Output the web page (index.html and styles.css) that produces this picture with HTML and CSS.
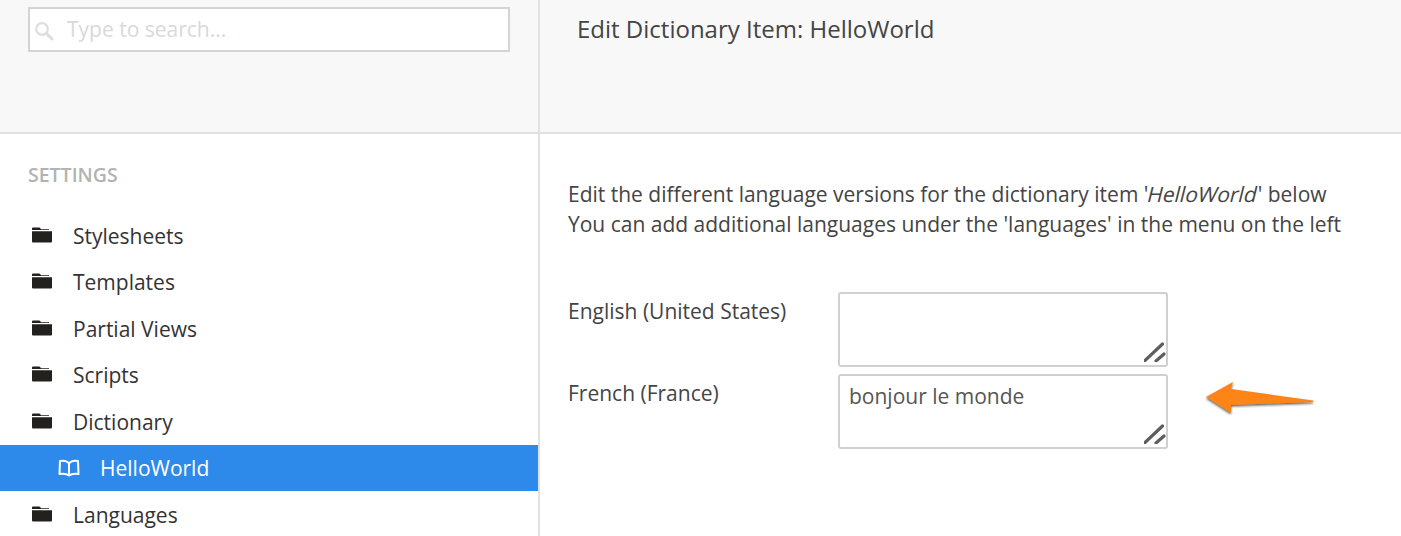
FILE: index.html
```html
<!DOCTYPE html>
<html lang="en">
<head>
<meta charset="utf-8">
<title>Edit Dictionary Item</title>
<link rel="stylesheet" href="styles.css">
</head>
<body>
<div class="app">
  <aside class="sidebar">
    <div class="side-head">
      <div class="search">
        <svg class="search-icon" width="20" height="20" viewBox="0 0 20 20"><circle cx="7" cy="8" r="5.800" fill="none" stroke="#dedede" stroke-width="2.200"/><path d="M11.500 12.500L17 18" stroke="#dedede" stroke-width="3" stroke-linecap="round"/></svg>
        <span class="placeholder">Type to search...</span>
      </div>
    </div>
    <div class="side-body">
      <h3 class="section">SETTINGS</h3>
      <ul class="tree">
        <li class="row"><svg class="folder" viewBox="0 0 20 16"><path d="M0 3V1.5Q0 .5 1 .5H7Q8 .5 8.5 1.5L9 2.2H17V3ZM0 4.2H20V14.5Q20 15.5 19 15.5H1Q0 15.5 0 14.5Z" fill="#22211d"/></svg><span>Stylesheets</span></li>
        <li class="row"><svg class="folder" viewBox="0 0 20 16"><path d="M0 3V1.5Q0 .5 1 .5H7Q8 .5 8.5 1.5L9 2.2H17V3ZM0 4.2H20V14.5Q20 15.5 19 15.5H1Q0 15.5 0 14.5Z" fill="#22211d"/></svg><span>Templates</span></li>
        <li class="row"><svg class="folder" viewBox="0 0 20 16"><path d="M0 3V1.5Q0 .5 1 .5H7Q8 .5 8.5 1.5L9 2.2H17V3ZM0 4.2H20V14.5Q20 15.5 19 15.5H1Q0 15.5 0 14.5Z" fill="#22211d"/></svg><span>Partial Views</span></li>
        <li class="row"><svg class="folder" viewBox="0 0 20 16"><path d="M0 3V1.5Q0 .5 1 .5H7Q8 .5 8.5 1.5L9 2.2H17V3ZM0 4.2H20V14.5Q20 15.5 19 15.5H1Q0 15.5 0 14.5Z" fill="#22211d"/></svg><span>Scripts</span></li>
        <li class="row"><svg class="folder" viewBox="0 0 20 16"><path d="M0 3V1.5Q0 .5 1 .5H7Q8 .5 8.5 1.5L9 2.2H17V3ZM0 4.2H20V14.5Q20 15.5 19 15.5H1Q0 15.5 0 14.5Z" fill="#22211d"/></svg><span>Dictionary</span></li>
        <li class="row active"><svg class="book" viewBox="0 0 22 18"><path d="M11 4.500C9 2 5 1.500 2 2L1.500 15C5 14.500 9 15 11 16.500C13 15 17 14.500 20.500 15L20 2C17 1.500 13 2 11 4.500ZM11 4.500V16" fill="none" stroke="#fff" stroke-width="2" stroke-linejoin="round"/></svg><span>HelloWorld</span></li>
        <li class="row"><svg class="folder" viewBox="0 0 20 16"><path d="M0 3V1.5Q0 .5 1 .5H7Q8 .5 8.5 1.5L9 2.2H17V3ZM0 4.2H20V14.5Q20 15.5 19 15.5H1Q0 15.5 0 14.5Z" fill="#22211d"/></svg><span>Languages</span></li>
      </ul>
    </div>
  </aside>
  <main class="content">
    <header class="main-head"><h1 class="title">Edit Dictionary Item: HelloWorld</h1></header>
    <section class="main-body">
      <p class="intro">Edit the different language versions for the dictionary item '<span class="slant">HelloWorld</span>' below<br>You can add additional languages under the 'languages' in the menu on the left</p>
      <div class="field">
        <label class="lang">English (United States)</label>
        <div class="box"><svg class="grip" viewBox="0 0 22 22"><path d="M.5 21L18.500 4M12 21L20 14" stroke="#5e5e5e" stroke-width="3.200" stroke-linecap="round"/></svg></div>
      </div>
      <div class="field">
        <label class="lang">French (France)</label>
        <div class="box">bonjour le monde<svg class="grip" viewBox="0 0 22 22"><path d="M.5 21L18.500 4M12 21L20 14" stroke="#5e5e5e" stroke-width="3.200" stroke-linecap="round"/></svg></div>
        <svg class="arrow" width="112" height="36" viewBox="0 0 112 36"><defs><filter id="s" x="-10%" y="-30%" width="120%" height="170%"><feDropShadow dx="0" dy="1.500" stdDeviation="1" flood-color="#222" flood-opacity=".75"/></filter></defs><path d="M1 19L28 4L26 11L108 22.500V24L26 27L26 35Z" transform="translate(0,-1)" fill="#fd8419" filter="url(#s)"/></svg>
      </div>
    </section>
  </main>
</div>
</body>
</html>
```
FILE: styles.css
```css
* { box-sizing: border-box; }
html, body { margin: 0; height: 100%; overflow: hidden; background: #fff; }
body { font-family: "Open Sans", sans-serif; color: #444; }
.app { display: flex; height: 536px; }

.sidebar { width: 540px; flex: none; border-right: 2px solid #e1e1e1; }
.side-head { height: 134px; background: #f8f8f8; border-bottom: 2px solid #e1e1e1; padding: 7px 0 0 28px; }
.search { width: 482px; height: 45px; background: #fff; border: 2px solid #d4d4d4; display: flex; align-items: center; padding-left: 5px; }
.search-icon { flex: none; margin-top: 3px; }
.placeholder { margin-left: 12px; margin-top: -2px; font-size: 21px; color: #d9d9d9; }

.side-body { padding-top: 28px; }
.section { margin: 0 0 0 28px; font-size: 19.5px; line-height: 26px; font-weight: 600; color: #b3b3b3; }
.tree { list-style: none; margin: 24.4px 0 0; padding: 0; }
.row { height: 46.5px; display: flex; align-items: center; font-size: 21px; color: #333; padding-left: 32px; }
.row span { margin-left: 21px; }
.folder { width: 20px; height: 16px; flex: none; margin-top: -2px; }
.active { background: #2e8aea; color: #fff; padding-left: 58px; }
.active span { margin-left: 20px; }
.book { width: 22px; height: 18px; flex: none; }

.content { flex: 1; min-width: 0; }
.main-head { height: 134px; background: #f8f8f8; border-bottom: 2px solid #e1e1e1; padding: 11px 0 0 37px; }
.title { margin: 0; font-size: 24px; line-height: 35px; font-weight: 400; color: #444; }
.main-body { padding: 45px 0 0 28px; }
.intro { margin: 0 0 53px; font-size: 21px; line-height: 30px; color: #444; white-space: nowrap; }
.slant { display: inline-block; transform: skewX(-14deg); }
.field { display: flex; align-items: flex-start; margin-bottom: 7px; position: relative; }
.lang { width: 270px; flex: none; font-size: 21px; line-height: 28px; padding-top: 5px; color: #444; }
.box { width: 330px; height: 75px; border: 2px solid #d0d0d0; border-radius: 3px; padding: 6px 9px; font-size: 21px; line-height: 28px; color: #555; position: relative; }
.grip { position: absolute; right: 0; bottom: 3px; width: 22px; height: 22px; }
.arrow { position: absolute; left: 637px; top: 5px; }
```
